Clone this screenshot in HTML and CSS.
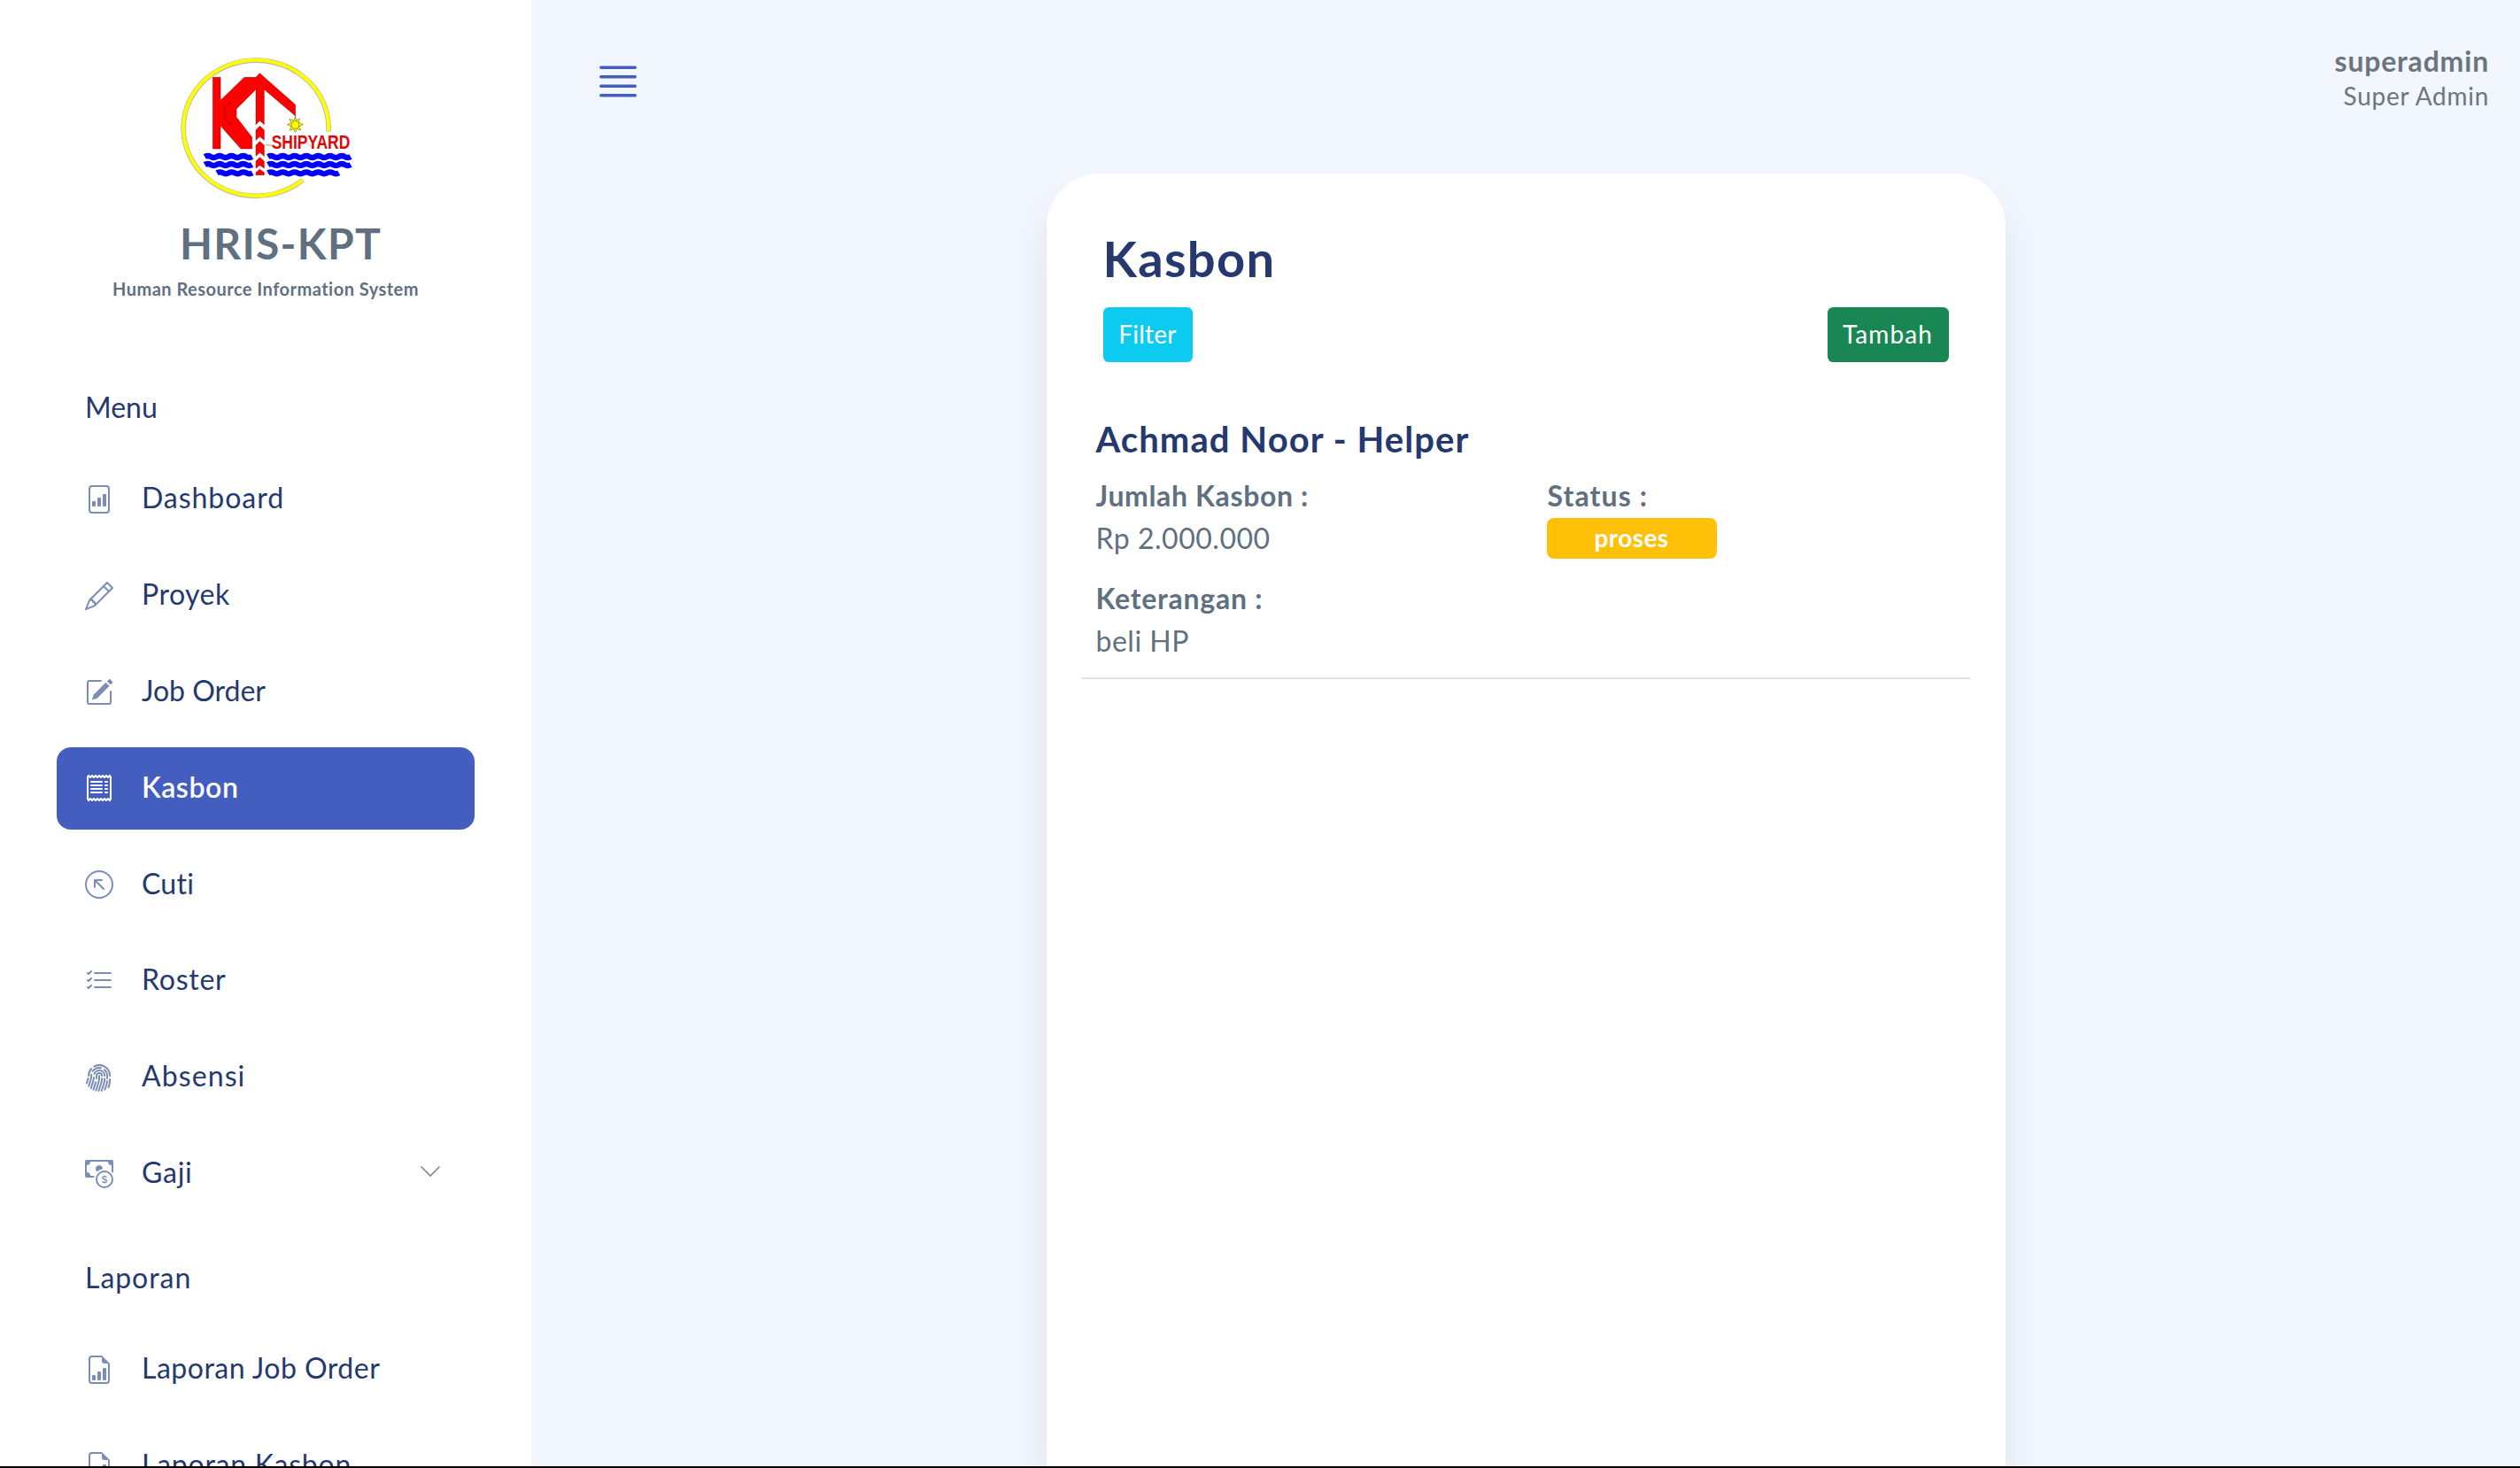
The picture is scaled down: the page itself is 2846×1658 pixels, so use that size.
FILE: index.html
```
<!DOCTYPE html>
<html lang="id">
<head>
<meta charset="utf-8">
<title>HRIS-KPT - Kasbon</title>
<link rel="stylesheet" href="styles.css">
</head>
<body>
<div class="app">
  <aside class="sidebar">
    <svg class="logo" viewBox="0 0 690 570" aria-label="KT Shipyard">
      <g fill="none">
        <path d="M543 299A246 230 0 1 0 456 463" stroke="#b9b9a8" stroke-width="17"/>
        <path d="M543 298A246 230 0 1 0 455 463" stroke="#ff0" stroke-width="12"/>
      </g>
      <g fill="#f00" stroke="#7a1010" stroke-width="1.5">
        <path d="M151 115H177V193L258 115H297L310 101L431 208V246L325 156V275L310 262L297 275V156L231 222V250L284 318V357H246L177 279V357H151Z"/>
        <path d="M297 293L310 280L325 293V328L310 316L297 328Z"/>
        <path d="M297 345L310 332L325 345V382L310 370L297 382Z"/>
        <path d="M297 399L310 386L325 399V423L310 413L297 423Z"/>
        <path d="M297 437L310 427L325 437V446H297Z"/>
      </g>
      <path d="M215 197L191 220V252L215 277M431 246V300" fill="none" stroke="#7a1010" stroke-width="2"/>
      <path d="M330 342L354 347M468 338L488 352M330 345H350" fill="none" stroke="#aaa" stroke-width="2"/>
      <path d="M430 250L434 262L445 255L442 267L457 275L443 281L449 294L437 290L430 301L424 290L412 295L417 281L403 275L417 269L411 256L425 262Z" fill="#ff0" stroke="#776b20" stroke-width="2"/>
      <circle cx="430" cy="276" r="13" fill="#ff0" stroke="#776b20" stroke-width="2"/>
      <g fill="none" stroke="#00f" stroke-width="19">
        <path d="M124 384q10-6 20 0t20 0 20 0 20 0 20 0 20 0 20 0 20 0"/>
        <path d="M124 411q10-6 20 0t20 0 20 0 20 0 20 0 20 0 20 0 20 0"/>
        <path d="M165 439q10-6 20 0t20 0 20 0 20 0 20 0 20 0"/>
        <path d="M338 384q10-6 20 0t20 0 20 0 20 0 20 0 20 0 20 0 20 0 20 0 20 0 20 0 20 0 20 0 20 0"/>
        <path d="M338 411q10-6 20 0t20 0 20 0 20 0 20 0 20 0 20 0 20 0 20 0 20 0 20 0 20 0 20 0 20 0"/>
        <path d="M338 439q10-6 20 0t20 0 20 0 20 0 20 0 20 0 20 0 20 0 20 0 20 0 20 0 20 0"/>
      </g>
      <text class="logo-text" x="350" y="356" textLength="266" lengthAdjust="spacingAndGlyphs">SHIPYARD</text>
    </svg>
    <h1 class="brand">HRIS-KPT</h1>
    <p class="tagline">Human Resource Information System</p>

    <nav>
      <h2 class="menu-title">Menu</h2>
      <ul class="menu">
        <li><a class="link ls-95"><svg class="icon" viewBox="0 0 16 16"><path d="M4.5 12a.5.5 0 0 1-.5-.5v-2a.5.5 0 0 1 .5-.5h1a.5.5 0 0 1 .5.5v2a.5.5 0 0 1-.5.5h-1zm3 0a.5.5 0 0 1-.5-.5v-4a.5.5 0 0 1 .5-.5h1a.5.5 0 0 1 .5.5v4a.5.5 0 0 1-.5.5h-1zm3 0a.5.5 0 0 1-.5-.5v-6a.5.5 0 0 1 .5-.5h1a.5.5 0 0 1 .5.5v6a.5.5 0 0 1-.5.5h-1z"/><path d="M4 0a2 2 0 0 0-2 2v12a2 2 0 0 0 2 2h8a2 2 0 0 0 2-2V2a2 2 0 0 0-2-2H4zm0 1h8a1 1 0 0 1 1 1v12a1 1 0 0 1-1 1H4a1 1 0 0 1-1-1V2a1 1 0 0 1 1-1z"/></svg><span class="label">Dashboard</span></a></li>
        <li><a class="link ls-50"><svg class="icon" viewBox="0 0 16 16"><path d="M12.146.146a.5.5 0 0 1 .708 0l3 3a.5.5 0 0 1 0 .708l-10 10a.5.5 0 0 1-.168.11l-5 2a.5.5 0 0 1-.65-.65l2-5a.5.5 0 0 1 .11-.168l10-10zM11.207 2.5 13.5 4.793 14.793 3.5 12.5 1.207 11.207 2.5zm1.586 3L10.500 3.207 4 9.707V10h.5a.5.5 0 0 1 .5.5v.5h.5a.5.5 0 0 1 .5.5v.5h.293l6.500-6.500zm-9.761 5.175-.106.106-1.528 3.821 3.821-1.528.106-.106A.5.5 0 0 1 5 12.500V12h-.5a.5.5 0 0 1-.5-.5V11h-.5a.5.5 0 0 1-.468-.325z"/></svg><span class="label">Proyek</span></a></li>
        <li><a class="link"><svg class="icon" viewBox="0 0 16 16"><path d="M15.502 1.94a.5.5 0 0 1 0 .706L14.459 3.690l-2-2L13.502.646a.5.5 0 0 1 .707 0l1.293 1.293zm-1.750 2.456-2-2L4.939 9.210a.5.5 0 0 0-.121.196l-.805 2.414a.25.25 0 0 0 .316.316l2.414-.805a.5.5 0 0 0 .196-.120l6.813-6.814z"/><path fill-rule="evenodd" d="M1 13.500A1.500 1.500 0 0 0 2.500 15h11a1.500 1.500 0 0 0 1.500-1.500v-6a.5.5 0 0 0-1 0v6a.5.5 0 0 1-.5.5h-11a.5.5 0 0 1-.5-.5v-11a.5.5 0 0 1 .5-.5H9a.5.5 0 0 0 0-1H2.500A1.500 1.500 0 0 0 1 2.500v11z"/></svg><span class="label">Job Order</span></a></li>
        <li><a class="link active ls-63"><svg class="icon" viewBox="0 0 16 16"><path d="M1.920.506a.5.5 0 0 1 .434.14L3 1.293l.646-.647a.5.5 0 0 1 .708 0L5 1.293l.646-.647a.5.5 0 0 1 .708 0L7 1.293l.646-.647a.5.5 0 0 1 .708 0L9 1.293l.646-.647a.5.5 0 0 1 .708 0l.646.647.646-.647a.5.5 0 0 1 .708 0l.646.647.646-.647a.5.5 0 0 1 .801.13l.5 1A.5.5 0 0 1 15 2v12a.5.5 0 0 1-.053.224l-.5 1a.5.5 0 0 1-.8.13L13 14.707l-.646.647a.5.5 0 0 1-.708 0L11 14.707l-.646.647a.5.5 0 0 1-.708 0L9 14.707l-.646.647a.5.5 0 0 1-.708 0L7 14.707l-.646.647a.5.5 0 0 1-.708 0L5 14.707l-.646.647a.5.5 0 0 1-.708 0L3 14.707l-.646.647a.5.5 0 0 1-.801-.13l-.5-1A.5.5 0 0 1 1 14V2a.5.5 0 0 1 .053-.224l.5-1a.5.5 0 0 1 .367-.27zm.217 1.338L2 2.118v11.764l.137.274.51-.51a.5.5 0 0 1 .707 0l.646.647.646-.646a.5.5 0 0 1 .708 0l.646.646.646-.646a.5.5 0 0 1 .708 0l.646.646.646-.646a.5.5 0 0 1 .708 0l.646.646.646-.646a.5.5 0 0 1 .708 0l.646.646.646-.646a.5.5 0 0 1 .708 0l.509.509.137-.274V2.118l-.137-.274-.51.51a.5.5 0 0 1-.707 0L12 1.707l-.646.647a.5.5 0 0 1-.708 0L10 1.707l-.646.647a.5.5 0 0 1-.708 0L8 1.707l-.646.647a.5.5 0 0 1-.708 0L6 1.707l-.646.647a.5.5 0 0 1-.708 0L4 1.707l-.646.647a.5.5 0 0 1-.708 0l-.509-.51z"/><path d="M3 4.500a.5.5 0 0 1 .5-.5h6a.5.5 0 1 1 0 1h-6a.5.5 0 0 1-.5-.5zm0 2a.5.5 0 0 1 .5-.5h6a.5.5 0 1 1 0 1h-6a.5.5 0 0 1-.5-.5zm0 2a.5.5 0 0 1 .5-.5h6a.5.5 0 1 1 0 1h-6a.5.5 0 0 1-.5-.5zm0 2a.5.5 0 0 1 .5-.5h6a.5.5 0 0 1 0 1h-6a.5.5 0 0 1-.5-.5zm8-6a.5.5 0 0 1 .5-.5h1a.5.5 0 0 1 0 1h-1a.5.5 0 0 1-.5-.5zm0 2a.5.5 0 0 1 .5-.5h1a.5.5 0 0 1 0 1h-1a.5.5 0 0 1-.5-.5zm0 2a.5.5 0 0 1 .5-.5h1a.5.5 0 0 1 0 1h-1a.5.5 0 0 1-.5-.5zm0 2a.5.5 0 0 1 .5-.5h1a.5.5 0 0 1 0 1h-1a.5.5 0 0 1-.5-.5z"/></svg><span class="label">Kasbon</span></a></li>
        <li><a class="link ls-25"><svg class="icon" viewBox="0 0 16 16"><g fill="none" stroke="currentColor" stroke-linecap="round" stroke-linejoin="round"><circle cx="8" cy="8" r="7.5"/><path d="M10.500 10.500 5.500 5.500M5.500 9.500v-4h4"/></g></svg><span class="label">Cuti</span></a></li>
        <li><a class="link ls-74"><svg class="icon" viewBox="0 0 16 16"><path fill-rule="evenodd" d="M5 11.500a.5.5 0 0 1 .5-.5h9a.5.5 0 0 1 0 1h-9a.5.5 0 0 1-.5-.5zm0-4a.5.5 0 0 1 .5-.5h9a.5.5 0 0 1 0 1h-9a.5.5 0 0 1-.5-.5zm0-4a.5.5 0 0 1 .5-.5h9a.5.5 0 0 1 0 1h-9a.5.5 0 0 1-.5-.5zM3.854 2.146a.5.5 0 0 1 0 .708l-1.500 1.500a.5.5 0 0 1-.708 0l-.5-.5a.5.5 0 1 1 .708-.708L2 3.293l1.146-1.147a.5.5 0 0 1 .708 0zm0 4a.5.5 0 0 1 0 .708l-1.500 1.500a.5.5 0 0 1-.708 0l-.5-.5a.5.5 0 1 1 .708-.708L2 7.293l1.146-1.147a.5.5 0 0 1 .708 0zm0 4a.5.5 0 0 1 0 .708l-1.500 1.500a.5.5 0 0 1-.708 0l-.5-.5a.5.5 0 0 1 .708-.708l.146.147 1.146-1.147a.5.5 0 0 1 .708 0z"/></svg><span class="label">Roster</span></a></li>
        <li><a class="link ls-110"><svg class="icon" viewBox="0 0 16 16"><path d="M8.060 6.500a.5.5 0 0 1 .5.5v.776a11.500 11.500 0 0 1-.552 3.519l-1.331 4.140a.5.5 0 0 1-.952-.305l1.330-4.141a10.500 10.500 0 0 0 .504-3.213V7a.5.5 0 0 1 .5-.5Z"/><path d="M6.060 7a2 2 0 1 1 4 0 .5.5 0 1 1-1 0 1 1 0 1 0-2 0v.332c0 .409-.022.816-.066 1.221A.5.5 0 0 1 6 8.447c.04-.37.06-.742.06-1.115V7Zm3.509 1a.5.5 0 0 1 .487.513 11.500 11.500 0 0 1-.587 3.339l-1.266 3.800a.5.5 0 0 1-.949-.317l1.267-3.800a10.500 10.500 0 0 0 .535-3.048A.5.5 0 0 1 9.569 8Zm-3.356 2.115a.5.5 0 0 1 .33.626L5.240 14.939a.5.5 0 1 1-.955-.296l1.303-4.199a.5.5 0 0 1 .625-.329Z"/><path d="M4.759 5.833A3.501 3.501 0 0 1 11.559 7a.5.5 0 0 1-1 0 2.500 2.500 0 0 0-4.857-.833.5.5 0 1 1-.943-.334Zm.3 1.670a.5.5 0 0 1 .449.546 10.720 10.720 0 0 1-.4 2.031l-1.222 4.072a.5.5 0 1 1-.958-.287L4.150 9.793a9.720 9.720 0 0 0 .363-1.842.5.5 0 0 1 .546-.449Zm6 .647a.5.5 0 0 1 .5.5c0 1.280-.213 2.552-.632 3.762l-1.090 3.145a.5.5 0 0 1-.944-.327l1.089-3.145c.382-1.105.578-2.266.578-3.435a.5.5 0 0 1 .5-.5Z"/><path d="M3.902 4.222a4.996 4.996 0 0 1 5.202-2.113.5.5 0 0 1-.208.979 3.996 3.996 0 0 0-4.163 1.690.5.5 0 0 1-.831-.556Zm6.720-.955a.5.5 0 0 1 .705-.052A4.990 4.990 0 0 1 13.059 7v1.500a.5.5 0 1 1-1 0V7a3.990 3.990 0 0 0-1.386-3.028.5.5 0 0 1-.051-.705ZM3.680 5.842a.5.5 0 0 1 .422.568c-.029.192-.044.39-.044.59 0 .71-.1 1.417-.298 2.100l-1.140 3.923a.5.5 0 1 1-.96-.279L2.800 8.821A6.531 6.531 0 0 0 3.058 7c0-.25.019-.496.054-.736a.5.5 0 0 1 .568-.422Zm8.882 3.660a.5.5 0 0 1 .456.54c-.084 1-.298 1.986-.64 2.934l-.744 2.068a.5.5 0 0 1-.941-.338l.745-2.070a10.510 10.510 0 0 0 .584-2.678.5.5 0 0 1 .54-.456Z"/><path d="M4.810 1.370A6.500 6.500 0 0 1 14.560 7a.5.5 0 1 1-1 0 5.500 5.500 0 0 0-8.250-4.765.5.5 0 0 1-.5-.865Zm-.89 1.257a.5.5 0 0 1 .04.706A5.478 5.478 0 0 0 2.560 7a.5.5 0 0 1-1 0c0-1.664.626-3.184 1.655-4.333a.5.5 0 0 1 .706-.04ZM1.915 8.020a.5.5 0 0 1 .346.616l-.779 2.767a.5.5 0 1 1-.962-.27l.778-2.767a.5.5 0 0 1 .617-.346Zm12.150.481a.5.5 0 0 1 .49.51c-.03 1.499-.161 3.025-.727 4.533l-.07.187a.5.5 0 0 1-.936-.351l.07-.187c.506-1.350.634-2.740.663-4.202a.5.5 0 0 1 .51-.49Z"/></svg><span class="label">Absensi</span></a></li>
        <li><a class="link ls-74"><svg class="icon" viewBox="0 0 16 16"><path fill-rule="evenodd" d="M11 15a4 4 0 1 0 0-8 4 4 0 0 0 0 8zm5-4a5 5 0 1 1-10 0 5 5 0 0 1 10 0z"/><path d="M9.438 11.944c.047.596.518 1.060 1.363 1.116v.44h.375v-.443c.875-.061 1.386-.529 1.386-1.207 0-.618-.39-.936-1.090-1.100l-.296-.07v-1.200c.376.043.614.248.671.532h.658c-.047-.575-.54-1.024-1.329-1.073V8.500h-.375v.45c-.747.073-1.255.522-1.255 1.158 0 .562.378.92 1.007 1.066l.248.061v1.272c-.384-.058-.639-.27-.696-.563h-.668zm1.360-1.354c-.369-.085-.569-.26-.569-.522 0-.294.216-.514.572-.578v1.100h-.003zm.432.746c.449.104.655.272.655.569 0 .339-.257.571-.709.614v-1.195l.054.012z"/><path d="M1 0a1 1 0 0 0-1 1v8a1 1 0 0 0 1 1h4.083c.058-.344.145-.678.258-1H3a2 2 0 0 0-2-2V3a2 2 0 0 0 2-2h10a2 2 0 0 0 2 2v3.528c.38.34.717.728 1 1.154V1a1 1 0 0 0-1-1H1z"/><path d="M9.998 5.083 10 5a2 2 0 1 0-3.132 1.650 5.982 5.982 0 0 1 3.130-1.567z"/></svg><span class="label">Gaji</span><svg class="chevron" viewBox="0 0 24 14"><path d="M1.500 1.500 12 12 22.500 1.500"/></svg></a></li>
      </ul>
      <h2 class="menu-title second ls-95">Laporan</h2>
      <ul class="menu">
        <li><a class="link ls-50"><svg class="icon" viewBox="0 0 16 16"><path d="M10 13.500a.5.5 0 0 0 .5.5h1a.5.5 0 0 0 .5-.5v-6a.5.5 0 0 0-.5-.5h-1a.5.5 0 0 0-.5.5v6zm-2.500.5a.5.5 0 0 1-.5-.5v-4a.5.5 0 0 1 .5-.5h1a.5.5 0 0 1 .5.5v4a.5.5 0 0 1-.5.5h-1zm-3 0a.5.5 0 0 1-.5-.5v-2a.5.5 0 0 1 .5-.5h1a.5.5 0 0 1 .5.5v2a.5.5 0 0 1-.5.5h-1z"/><path d="M14 14V4.500L9.500 0H4a2 2 0 0 0-2 2v12a2 2 0 0 0 2 2h8a2 2 0 0 0 2-2zM9.500 3A1.500 1.500 0 0 0 11 4.500h2V14a1 1 0 0 1-1 1H4a1 1 0 0 1-1-1V2a1 1 0 0 1 1-1h5.500v2z"/></svg><span class="label">Laporan Job Order</span></a></li>
        <li><a class="link ls-74"><svg class="icon" viewBox="0 0 16 16"><path d="M10 13.500a.5.5 0 0 0 .5.5h1a.5.5 0 0 0 .5-.5v-6a.5.5 0 0 0-.5-.5h-1a.5.5 0 0 0-.5.5v6zm-2.500.5a.5.5 0 0 1-.5-.5v-4a.5.5 0 0 1 .5-.5h1a.5.5 0 0 1 .5.5v4a.5.5 0 0 1-.5.5h-1zm-3 0a.5.5 0 0 1-.5-.5v-2a.5.5 0 0 1 .5-.5h1a.5.5 0 0 1 .5.5v2a.5.5 0 0 1-.5.5h-1z"/><path d="M14 14V4.500L9.500 0H4a2 2 0 0 0-2 2v12a2 2 0 0 0 2 2h8a2 2 0 0 0 2-2zM9.500 3A1.500 1.500 0 0 0 11 4.500h2V14a1 1 0 0 1-1 1H4a1 1 0 0 1-1-1V2a1 1 0 0 1 1-1h5.500v2z"/></svg><span class="label">Laporan Kasbon</span></a></li>
      </ul>
    </nav>
  </aside>

  <main class="main">
    <header class="topbar">
      <svg class="burger" viewBox="0 0 16 16"><path d="M2 12.500a.5.5 0 0 1 .5-.5h11a.5.5 0 0 1 0 1h-11a.5.5 0 0 1-.5-.5zm0-3a.5.5 0 0 1 .5-.5h11a.5.5 0 0 1 0 1h-11a.5.5 0 0 1-.5-.5zm0-3a.5.5 0 0 1 .5-.5h11a.5.5 0 0 1 0 1h-11a.5.5 0 0 1-.5-.5zm0-3a.5.5 0 0 1 .5-.5h11a.5.5 0 0 1 0 1h-11a.5.5 0 0 1-.5-.5z"/></svg>
      <div class="user">
        <p class="user-name">superadmin</p>
        <p class="user-role">Super Admin</p>
      </div>
    </header>

    <section class="card">
      <h2 class="card-title">Kasbon</h2>
      <div class="actions">
        <button class="btn btn-info">Filter</button>
        <button class="btn btn-success">Tambah</button>
      </div>
      <article class="entry">
        <h3 class="entry-name">Achmad Noor - Helper</h3>
        <div class="fields">
          <div>
            <p class="field-label ls-63">Jumlah Kasbon :</p>
            <p class="field-value">Rp 2.000.000</p>
          </div>
          <div>
            <p class="field-label ls-110">Status :</p>
            <span class="badge">proses</span>
          </div>
          <div>
            <p class="field-label ls-74">Keterangan :</p>
            <p class="field-value ls-63">beli HP</p>
          </div>
        </div>
      </article>
    </section>
  </main>
</div>
</body>
</html>
```
FILE: styles.css
```
* { box-sizing: border-box; }

html, body { margin: 0; height: 100%; overflow: hidden; }

body {
  font-family: Lato, "Open Sans", sans-serif;
  font-size: 32px;
  line-height: 48px;
  font-variant-ligatures: none;
  color: #607080;
  background: #f2f7ff;
}

h1, h2, h3, p, ul { margin: 0; padding: 0; }
ul { list-style: none; }

.app {
  display: flex;
  height: 1658px;
  border-bottom: 2px solid #000;
  overflow: hidden;
}

/* Sidebar */
.sidebar {
  flex: 0 0 600px;
  padding: 49px 64px 0;
  background: #fff;
  overflow: hidden;
}

.logo { display: block; width: 230px; height: 190px; margin-left: 126px; }
.logo-text {
  font-family: "Liberation Sans", Arial, sans-serif;
  font-size: 68px;
  font-weight: 700;
  fill: #dc0808;
}

.brand {
  margin: 7px 0 0 139px;
  font-size: 48px;
  font-weight: 700;
  line-height: 58px;
  letter-spacing: 1.3px;
}

.tagline {
  margin: 10px 0 0 63px;
  font-size: 20px;
  font-weight: 700;
  line-height: 24px;
  letter-spacing: .48px;
  white-space: nowrap;
}

.menu-title {
  margin: 98px 32px 33.600px;
  font-size: 32px;
  font-weight: 400;
  line-height: 48px;
  color: #25396f;
}
.menu-title.second { margin-top: 47px; }

.menu { display: flex; flex-direction: column; gap: 16px; }

.link {
  display: flex;
  align-items: center;
  height: 92.800px;
  padding: 0 38px 0 32px;
  border-radius: 16px;
  color: #25396f;
  white-space: nowrap;
}
.link.active { background: #435ebe; color: #fff; font-weight: 600; }

.icon { width: 32px; height: 32px; fill: currentColor; color: #7c8db5; }
.active .icon { color: #fff; }
.label { margin-left: 32px; padding-bottom: 3px; }

.chevron {
  width: 24px;
  height: 14px;
  margin: 0 0 5px auto;
  fill: none;
  stroke: #858585;
  stroke-width: 1.6;
}

/* Tracking steps */
.ls-25 { letter-spacing: .25px; }
.ls-50 { letter-spacing: .5px; }
.ls-63 { letter-spacing: .63px; }
.ls-74 { letter-spacing: .75px; }
.ls-95 { letter-spacing: .95px; }
.ls-110 { letter-spacing: 1.1px; }

/* Main column */
.main { flex: 1; display: flex; flex-direction: column; }

.topbar {
  display: flex;
  justify-content: space-between;
  align-items: flex-start;
  height: 196px;
  padding: 48.600px 35px 0 70px;
}
.burger { width: 56px; height: 56px; margin-top: 15px; fill: #435ebe; }
.user { text-align: right; color: #6c757d; }
.user-name { font-weight: 700; line-height: 40px; letter-spacing: .8px; }
.user-role { margin-top: 1.600px; font-size: 28px; line-height: 36px; letter-spacing: .72px; }

.card {
  flex: 1;
  width: 1083px;
  margin: 0 auto;
  padding: 61.800px 40px 0;
  border-radius: 60px 60px 0 0;
  background: #fff;
  box-shadow: 0 28px 44px rgba(0, 0, 0, .085);
}

.card-title {
  margin-left: 24px;
  font-size: 56px;
  font-weight: 700;
  line-height: 68px;
  letter-spacing: 1.340px;
  color: #25396f;
}

.actions {
  display: flex;
  justify-content: space-between;
  margin: 21.200px 24px 0;
}

.btn {
  height: 62px;
  padding: 0 18px 2px;
  border: 0;
  border-radius: 6.400px;
  font: 400 28px/36px Lato, "Open Sans", sans-serif;
  color: #fff;
}
.btn-info { width: 101px; padding: 0 16px 2px; background: #0dcaf0; letter-spacing: .23px; }
.btn-success { width: 137px; padding: 0 16px 2px; background: #198754; letter-spacing: 1.120px; }

.entry {
  margin-top: 63px;
  padding: 0 16px 16.900px;
  border-bottom: 2px solid #dce1ea;
}
.entry-name {
  font-size: 40px;
  font-weight: 700;
  line-height: 48px;
  letter-spacing: 1.080px;
  color: #25396f;
}
.fields {
  display: grid;
  grid-template-columns: 510px 1fr;
  row-gap: 20px;
  margin-top: 16px;
}
.field-label { font-weight: 700; }
.field-value { letter-spacing: .51px; }

.badge {
  display: block;
  width: 192px;
  height: 46px;
  margin: .900px 0 0 -1px;
  border-radius: 8px;
  background: #ffc107;
  color: #fff;
  font-size: 28px;
  font-weight: 700;
  line-height: 44px;
  letter-spacing: .44px;
  text-align: center;
}
```
